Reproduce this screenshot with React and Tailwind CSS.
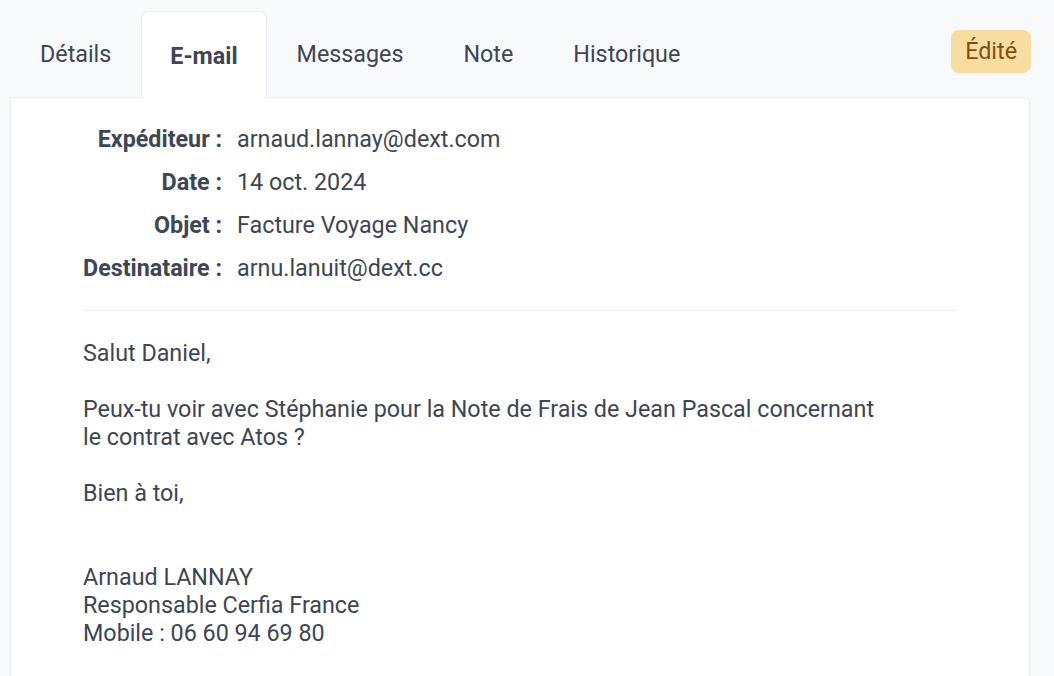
import React from "react";

const tabs = ["Détails", "E-mail", "Messages", "Note", "Historique"];

const headers = [
  ["Expéditeur :", "arnaud.lannay@dext.com"],
  ["Date :", "14 oct. 2024"],
  ["Objet :", "Facture Voyage Nancy"],
  ["Destinataire :", "arnu.lanuit@dext.cc"],
];

const body = `Salut Daniel,

Peux-tu voir avec Stéphanie pour la Note de Frais de Jean Pascal concernant
le contrat avec Atos ?

Bien à toi,


Arnaud LANNAY
Responsable Cerfia France
Mobile : 06 60 94 69 80`;

export default function App() {
  return (
    <div
      className="min-h-[676px] w-full bg-[#f8f9fb] text-[#3e4553] overflow-hidden"
      style={{ fontFamily: "Roboto, 'Noto Sans', sans-serif" }}
    >
      <div className="pl-[10px] pr-[24px] pt-[10px]">
        <div className="flex items-center">
          <div className="flex items-end">
            {tabs.map((t) => {
              const active = t === "E-mail";
              return (
                <div
                  key={t}
                  className={
                    active
                      ? "relative z-10 -mb-px flex h-[87px] items-center rounded-t-lg border border-b-0 border-[#eceef1] bg-white px-[28px] pt-[2px] text-[23.3px] font-bold text-[#3e4553]"
                      : "flex h-[87px] items-center px-[30px] pt-[2px] text-[23.3px] text-[#3e4553]"
                  }
                >
                  {t}
                </div>
              );
            })}
          </div>
          <div className="ml-auto -mr-px mb-[4px] flex h-[43px] items-center rounded-lg bg-[#f9dc9f] px-[14px] text-[23.3px] text-[#7a5019]">
            Édité
          </div>
        </div>
        <div className="min-h-[600px] rounded-tr-md border border-[#eceef1] bg-white px-[72px] pt-[27px]">
          <div className="grid grid-cols-[auto_1fr] gap-x-[15px] gap-y-[15px] text-[23.3px] leading-[28px]">
            {headers.map(([k, v]) => (
              <React.Fragment key={k}>
                <div className="text-right font-bold">{k}</div>
                <div>{v}</div>
              </React.Fragment>
            ))}
          </div>
          <div className="mt-[28px] border-t border-[#eceef1]" />
          <div className="mt-[28px] whitespace-pre-line text-[23.3px] leading-[28px]">
            {body}
          </div>
        </div>
      </div>
    </div>
  );
}
